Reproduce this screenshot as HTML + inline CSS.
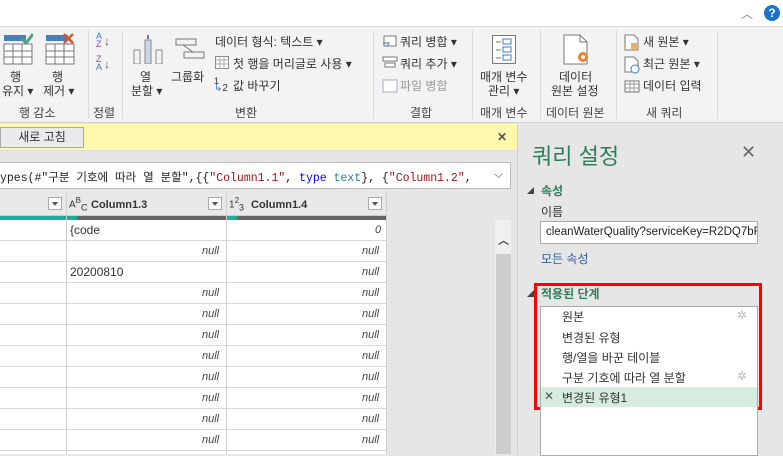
<!DOCTYPE html>
<html><head><meta charset="utf-8"><style>
*{margin:0;padding:0;box-sizing:border-box}
body{width:783px;height:454px;overflow:hidden;position:relative;background:#e6e6e6;font-family:"Liberation Sans","Noto Sans CJK KR",sans-serif;font-size:12px;color:#333}
.a{position:absolute;white-space:nowrap}
.sep{position:absolute;top:30px;height:89px;width:1px;background:#dcdcdc}
.gl{position:absolute;top:104px;font-size:12px;color:#444}
.null{font-style:italic;color:#444;font-size:11px}
.hl{position:absolute;left:0;width:386px;height:1px;background:#d8d8d8}
.dd{position:absolute;width:14px;height:13px;border:1px solid #aaa;background:#fff;top:197px}
.dd:after{content:"";position:absolute;left:3px;top:4px;border-left:3px solid transparent;border-right:3px solid transparent;border-top:4px solid #555}
</style></head><body>
<div class="a" style="left:0;top:0;width:783px;height:26px;background:#fff"></div>
<div class="a" style="left:741px;top:5px;font-size:12px;color:#888">︿</div>
<div class="a" style="left:764px;top:5px;width:16px;height:16px;border-radius:50%;background:#1a73c8;color:#fff;font-weight:bold;font-size:12px;text-align:center;line-height:16px">?</div>
<div class="a" style="left:0;top:26px;width:783px;height:97px;background:#f3f3f3;border-top:1px solid #dcdcdc;border-bottom:1px solid #d0d0d0"></div>
<div class="sep" style="left:88px"></div><div class="sep" style="left:122px"></div><div class="sep" style="left:373px"></div><div class="sep" style="left:472px"></div><div class="sep" style="left:540px"></div><div class="sep" style="left:616px"></div><div class="sep" style="left:717px"></div>
<svg class="a" style="left:3px;top:33px" width="30" height="32"><rect x="1" y="2" width="22" height="6" fill="#4a7ebb"/><path d="M19 6l4 4 7-9" stroke="#4aa386" stroke-width="3" fill="none"/><g stroke="#777" fill="#fff"><rect x="1" y="11" width="28" height="20"/><path d="M1 18h28M1 24h28M10 11v20M19 11v20"/></g></svg>
<svg class="a" style="left:45px;top:33px" width="30" height="32"><rect x="1" y="2" width="22" height="6" fill="#4a7ebb"/><path d="M19 1l9 9M28 1l-9 9" stroke="#d9542f" stroke-width="2.5"/><g stroke="#777" fill="#fff"><rect x="1" y="11" width="28" height="20"/><path d="M1 18h28M1 24h28M10 11v20M19 11v20"/></g></svg>
<div class="a" style="left:10px;top:68px">행</div><div class="a" style="left:2px;top:82px">유지 ▾</div>
<div class="a" style="left:52px;top:68px">행</div><div class="a" style="left:43px;top:82px">제거 ▾</div>
<div class="gl" style="left:19px">행 감소</div>
<div class="a" style="left:96px;top:32px;font-size:9px;line-height:8px;color:#3a7bc8">A<br><span style="color:#8a4ec0">Z</span></div><div class="a" style="left:104px;top:34px;font-size:12px;color:#555">↓</div>
<div class="a" style="left:96px;top:55px;font-size:9px;line-height:8px;color:#8a4ec0">Z<br><span style="color:#3a7bc8">A</span></div><div class="a" style="left:104px;top:57px;font-size:12px;color:#555">↓</div>
<div class="gl" style="left:93px">정렬</div>
<svg class="a" style="left:133px;top:34px" width="30" height="30"><rect x="1" y="16" width="6" height="14" fill="none" stroke="#888"/><rect x="12" y="6" width="6" height="24" fill="#c8d8ea" stroke="#888"/><rect x="23" y="16" width="6" height="14" fill="none" stroke="#888"/><path d="M15 1v4" stroke="#4a7ebb" stroke-width="2"/></svg>
<div class="a" style="left:140px;top:68px">열</div><div class="a" style="left:131px;top:82px">분할 ▾</div>
<svg class="a" style="left:175px;top:38px" width="30" height="22"><rect x="1" y="1" width="20" height="6" fill="none" stroke="#777"/><rect x="9" y="14" width="20" height="6" fill="none" stroke="#777"/><path d="M8 7l10 7" stroke="#777"/></svg>
<div class="a" style="left:171px;top:68px">그룹화</div>
<div class="a" style="left:215px;top:33px">데이터 형식: 텍스트 ▾</div>
<svg class="a" style="left:215px;top:56px" width="14" height="13"><rect x=".5" y=".5" width="13" height="12" fill="#fff" stroke="#888"/><path d="M0 4h14M0 8h14M5 0v13M9 0v13" stroke="#aaa"/></svg>
<div class="a" style="left:233px;top:55px">첫 행을 머리글로 사용 ▾</div>
<div class="a" style="left:214px;top:76px;font-size:9px;color:#333">1</div><div class="a" style="left:214px;top:83px;font-size:10px;color:#3a7bc8">↳<span style="color:#333">2</span></div>
<div class="a" style="left:233px;top:77px">값 바꾸기</div>
<div class="gl" style="left:235px">변환</div>
<svg class="a" style="left:382px;top:35px" width="16" height="62"><g stroke="#777" fill="#fff"><rect x="2" y="1" width="12" height="10"/><rect x="1" y="22" width="14" height="4"/><rect x="3" y="28" width="10" height="4"/><rect x="1" y="45" width="14" height="12" stroke="#aac"/></g><path d="M1 8h6l-2 3" stroke="#3a7bc8" fill="none"/></svg>
<div class="a" style="left:400px;top:33px">쿼리 병합 ▾</div>
<div class="a" style="left:400px;top:55px">쿼리 추가 ▾</div>
<div class="a" style="left:400px;top:77px;color:#999">파일 병합</div>
<div class="gl" style="left:410px">결합</div>
<svg class="a" style="left:492px;top:35px" width="24" height="30"><rect x=".5" y=".5" width="23" height="28" fill="#fff" stroke="#777"/><g stroke="#3a7bc8" fill="none"><rect x="11" y="4" width="8" height="5"/><rect x="11" y="12" width="8" height="5"/><rect x="11" y="20" width="8" height="5"/></g><path d="M4 7h5M4 15h5M4 23h5" stroke="#777"/></svg>
<div class="a" style="left:480px;top:68px">매개 변수</div><div class="a" style="left:488px;top:82px">관리 ▾</div>
<div class="gl" style="left:480px">매개 변수</div>
<svg class="a" style="left:563px;top:34px" width="28" height="32"><path d="M1 1h16l7 7v22H1z" fill="#fff" stroke="#777"/><path d="M17 1v7h7" fill="none" stroke="#777"/><circle cx="20" cy="23" r="5" fill="#e8842e"/><circle cx="20" cy="23" r="2" fill="#fff"/></svg>
<div class="a" style="left:559px;top:68px">데이터</div><div class="a" style="left:551px;top:82px">원본 설정</div>
<div class="gl" style="left:546px">데이터 원본</div>
<svg class="a" style="left:624px;top:34px" width="16" height="62"><path d="M1 1h9l4 4v11H1z" fill="#fff" stroke="#777"/><rect x="7" y="9" width="6" height="7" fill="#e8b060"/><path d="M1 23h9l4 4v11H1z" fill="#fff" stroke="#777"/><circle cx="11" cy="35" r="4" fill="#fff" stroke="#3a7bc8"/><rect x="1" y="47" width="14" height="11" fill="#fff" stroke="#777"/><path d="M1 50h14M1 54h14M6 47v11M10 47v11" stroke="#999"/></svg>
<div class="a" style="left:643px;top:33px">새 원본 ▾</div>
<div class="a" style="left:643px;top:55px">최근 원본 ▾</div>
<div class="a" style="left:643px;top:77px">데이터 입력</div>
<div class="gl" style="left:646px">새 쿼리</div>
<div class="a" style="left:0;top:124px;width:517px;height:27px;background:#fff9b0;border-bottom:1px solid #ddd"></div>
<div class="a" style="left:0;top:127px;width:84px;height:21px;background:#eaeaea;border:1px solid #aaa;text-align:center;line-height:19px">새로 고침</div>
<div class="a" style="left:497px;top:130px;font-weight:bold;color:#555">✕</div>
<div class="a" style="left:0;top:162px;width:511px;height:27px;background:#fff;border:1px solid #bbb;border-left:none;overflow:hidden"></div>
<div class="a" style="left:0;top:169px;width:480px;overflow:hidden;font-family:'Liberation Mono','Noto Sans CJK KR',monospace;font-size:11.5px;color:#222">ypes(#"구분 기호에 따라 열 분할",{{<span style="color:#a31515">"Column1.1"</span>, <span style="color:#0000ff">type</span> <span style="color:#267f99">text</span>}, {<span style="color:#a31515">"Column1.2"</span>,</div>
<div class="a" style="left:494px;top:167px;color:#555">⌵</div>
<div class="a" style="left:0;top:193px;width:386px;height:261px;background:#fff"></div>
<div class="a" style="left:0;top:193px;width:386px;height:23px;background:#e8e8e8;border-bottom:1px solid #ccc"></div>
<div class="a" style="left:0;top:216px;width:66px;height:4px;background:#1aaf9a"></div>
<div class="a" style="left:67px;top:216px;width:159px;height:4px;background:#666"></div><div class="a" style="left:67px;top:216px;width:10px;height:4px;background:#1aaf9a"></div>
<div class="a" style="left:227px;top:216px;width:159px;height:4px;background:#666"></div><div class="a" style="left:227px;top:216px;width:10px;height:4px;background:#1aaf9a"></div>
<div class="dd" style="left:48px"></div><div class="dd" style="left:208px"></div><div class="dd" style="left:368px"></div>
<div class="a" style="left:69px;top:196px;font-size:10px;color:#333">A<sup style="font-size:8px">B</sup><sub style="font-size:9px">C</sub></div>
<div class="a" style="left:91px;top:199px;font-size:11px;font-weight:bold;color:#333">Column1.3</div>
<div class="a" style="left:229px;top:196px;font-size:10px;color:#333">1<sup style="font-size:8px">2</sup><sub style="font-size:9px">3</sub></div>
<div class="a" style="left:251px;top:199px;font-size:11px;font-weight:bold;color:#333">Column1.4</div>
<div class="a" style="left:66px;top:193px;width:1px;height:261px;background:#d0d0d0"></div>
<div class="a" style="left:226px;top:193px;width:1px;height:261px;background:#d0d0d0"></div>
<div class="a" style="left:386px;top:193px;width:1px;height:261px;background:#d0d0d0"></div>
<div class="hl" style="top:240px"></div><div class="hl" style="top:261px"></div><div class="hl" style="top:282px"></div><div class="hl" style="top:303px"></div><div class="hl" style="top:324px"></div><div class="hl" style="top:345px"></div><div class="hl" style="top:366px"></div><div class="hl" style="top:387px"></div><div class="hl" style="top:408px"></div><div class="hl" style="top:429px"></div><div class="hl" style="top:450px"></div>
<div class="a" style="left:70px;top:223px;font-size:12px">{code</div>
<div class="a null" style="left:375px;top:224px">0</div>
<div class="a" style="left:70px;top:265px;font-size:12px">20200810</div>
<div class="a null" style="left:202px;top:245px">null</div><div class="a null" style="left:362px;top:245px">null</div>
<div class="a null" style="left:362px;top:266px">null</div>
<div class="a null" style="left:202px;top:287px">null</div><div class="a null" style="left:362px;top:287px">null</div>
<div class="a null" style="left:202px;top:308px">null</div><div class="a null" style="left:362px;top:308px">null</div>
<div class="a null" style="left:202px;top:329px">null</div><div class="a null" style="left:362px;top:329px">null</div>
<div class="a null" style="left:202px;top:350px">null</div><div class="a null" style="left:362px;top:350px">null</div>
<div class="a null" style="left:202px;top:371px">null</div><div class="a null" style="left:362px;top:371px">null</div>
<div class="a null" style="left:202px;top:392px">null</div><div class="a null" style="left:362px;top:392px">null</div>
<div class="a null" style="left:202px;top:413px">null</div><div class="a null" style="left:362px;top:413px">null</div>
<div class="a null" style="left:202px;top:434px">null</div><div class="a null" style="left:362px;top:434px">null</div>
<div class="a" style="left:495px;top:220px;width:16px;height:234px;background:#f0f0f0"></div>
<div class="a" style="left:496px;top:254px;width:15px;height:200px;background:#cdcdcd"></div>
<div class="a" style="left:498px;top:232px;font-size:11px;color:#444;font-weight:bold">︿</div>
<div class="a" style="left:517px;top:124px;width:1px;height:330px;background:#d0d0d0"></div>
<div class="a" style="left:532px;top:139px;font-size:22px;color:#2e7d5b">쿼리 설정</div>
<div class="a" style="left:741px;top:142px;font-size:18px;color:#666">✕</div>
<div class="a" style="left:527px;top:186px;font-size:7px;color:#444">◢</div>
<div class="a" style="left:541px;top:182px;font-weight:bold;color:#2e7d5b">속성</div>
<div class="a" style="left:541px;top:203px;color:#333">이름</div>
<div class="a" style="left:540px;top:221px;width:218px;height:23px;background:#fff;border:1px solid #aaa;padding:4px 5px;font-size:11.5px;color:#222;overflow:hidden">cleanWaterQuality?serviceKey=R2DQ7bR</div>
<div class="a" style="left:541px;top:250px;color:#2a5ea0">모든 속성</div>
<div class="a" style="left:527px;top:289px;font-size:7px;color:#444">◢</div>
<div class="a" style="left:534px;top:283px;width:228px;height:127px;border:3px solid #f00"></div>
<div class="a" style="left:541px;top:285px;font-weight:bold;color:#2e7d5b">적용된 단계</div>
<div class="a" style="left:540px;top:306px;width:218px;height:150px;background:#fff;border:1px solid #aaa"></div>
<div class="a" style="left:541px;top:387px;width:216px;height:20px;background:#d5ecdf"></div>
<div class="a" style="left:562px;top:308px">원본</div><div class="a" style="left:737px;top:308px;color:#bbb">✲</div>
<div class="a" style="left:562px;top:329px">변경된 유형</div>
<div class="a" style="left:562px;top:349px">행/열을 바꾼 테이블</div>
<div class="a" style="left:562px;top:369px">구분 기호에 따라 열 분할</div><div class="a" style="left:737px;top:369px;color:#bbb">✲</div>
<div class="a" style="left:544px;top:389px;color:#555">✕</div><div class="a" style="left:562px;top:389px">변경된 유형1</div>
</body></html>
